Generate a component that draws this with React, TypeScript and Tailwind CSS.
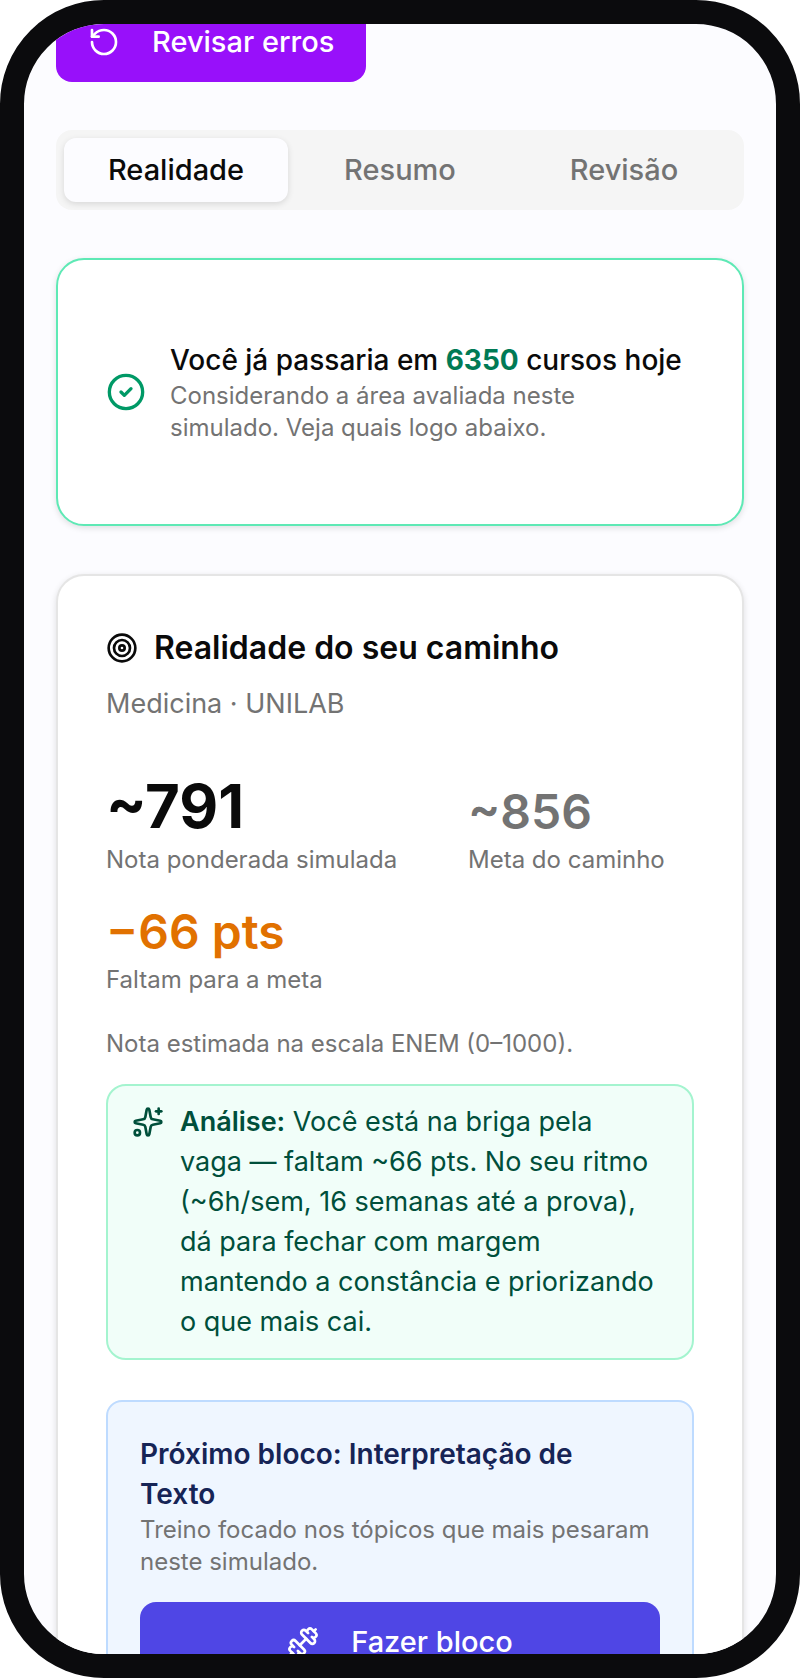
import {
  CircleCheck,
  Dumbbell,
  RotateCcw,
  Sparkles,
  Target,
} from "lucide-react";
import { useState } from "react";

const tabs = ["Realidade", "Resumo", "Revisão"];

function Metric({
  value,
  label,
  className,
}: {
  value: string;
  label: string;
  className: string;
}) {
  return (
    <div>
      <p className={className}>{value}</p>
      <p className="mt-2 text-2xl/8 text-neutral-500">{label}</p>
    </div>
  );
}

export default function App() {
  const [active, setActive] = useState("Realidade");

  return (
    <div className="h-screen overflow-hidden rounded-[104px] border-24 border-[#0b0b0d] bg-[#fcfcff] font-['Inter',sans-serif] text-neutral-950">
      {/* the screen is scrolled a little past the top of the button */}
      <main className="-mt-[22px] flex flex-col gap-12 px-8">
        <button
          type="button"
          className="flex h-20 items-center gap-8 self-start rounded-2xl bg-[#9810fa] px-8 text-[29px]/10 font-medium text-white"
        >
          <RotateCcw size={32} />
          Revisar erros
        </button>

        <div
          role="tablist"
          className="grid grid-cols-3 rounded-2xl bg-neutral-100 p-2"
        >
          {tabs.map((tab) => (
            <button
              key={tab}
              type="button"
              role="tab"
              aria-selected={tab === active}
              onClick={() => setActive(tab)}
              className={
                tab === active
                  ? "h-16 rounded-xl bg-[#fcfcff] text-[29px]/10 font-medium shadow-[0_2px_6px_rgba(0,0,0,0.12)]"
                  : "h-16 rounded-xl text-[29px]/10 font-medium text-neutral-500"
              }
            >
              {tab}
            </button>
          ))}
        </div>

        <section className="flex items-center gap-6 rounded-[28px] border-2 border-emerald-300 bg-white px-12 py-20 shadow-[0_2px_6px_rgba(0,0,0,0.12)]">
          <CircleCheck size={40} className="shrink-0 text-emerald-600" />
          <div>
            <p className="text-[28px]/10 font-medium whitespace-nowrap">
              Você já passaria em{" "}
              <strong className="font-bold text-emerald-700">6350</strong>{" "}
              cursos hoje
            </p>
            <p className="pr-16 text-2xl/8 text-neutral-500">
              Considerando a área avaliada neste simulado. Veja quais logo
              abaixo.
            </p>
          </div>
        </section>

        <section className="rounded-[28px] border-2 border-neutral-200 bg-white p-12 shadow-[0_2px_6px_rgba(0,0,0,0.12)]">
          <h2 className="flex items-center gap-4 text-[32px]/12 font-semibold">
            <Target size={32} />
            Realidade do seu caminho
          </h2>
          <p className="mt-3 text-[27px]/10 text-neutral-500">
            Medicina · UNILAB
          </p>

          <div className="mt-13 grid grid-cols-[298px_1fr] items-end gap-x-16 gap-y-8">
            <Metric
              value="~791"
              label="Nota ponderada simulada"
              className="text-[60px]/15 font-bold"
            />
            <Metric
              value="~856"
              label="Meta do caminho"
              className="text-5xl/12 font-semibold text-neutral-500"
            />
            <Metric
              value="−66 pts"
              label="Faltam para a meta"
              className="text-5xl/12 font-semibold text-[#e17100]"
            />
          </div>

          <p className="mt-8 text-2xl/8 text-neutral-500">
            Nota estimada na escala ENEM (0–1000).
          </p>

          <div className="mt-6 flex gap-4 rounded-[20px] border-2 border-[#a4f4cf] bg-[#f1fef9] py-4 pr-4 pl-6 text-[#004f3b]">
            <Sparkles size={32} className="mt-1 shrink-0" />
            <p className="text-[27px]/10">
              <strong className="font-semibold">Análise:</strong> Você está na
              briga pela
              <br />
              vaga — faltam ~66 pts. No seu ritmo
              <br />
              (~6h/sem, 16 semanas até a prova),
              <br />
              dá para fechar com margem
              <br />
              mantendo a constância e priorizando
              <br />o que mais cai.
            </p>
          </div>

          <div className="mt-10 rounded-2xl border-2 border-[#bedbff] bg-blue-50 p-8">
            <h3 className="pr-12 text-[28px]/10 font-semibold text-[#162456]">
              Próximo bloco: Interpretação de Texto
            </h3>
            <p className="text-2xl/8 text-neutral-500">
              Treino focado nos tópicos que mais pesaram neste simulado.
            </p>
            <button
              type="button"
              className="mt-6 flex h-20 w-full items-center justify-center gap-8 rounded-2xl bg-[#4f46e5] text-[29px]/10 font-medium text-white"
            >
              <Dumbbell size={32} />
              Fazer bloco
            </button>
          </div>
        </section>
      </main>
    </div>
  );
}
